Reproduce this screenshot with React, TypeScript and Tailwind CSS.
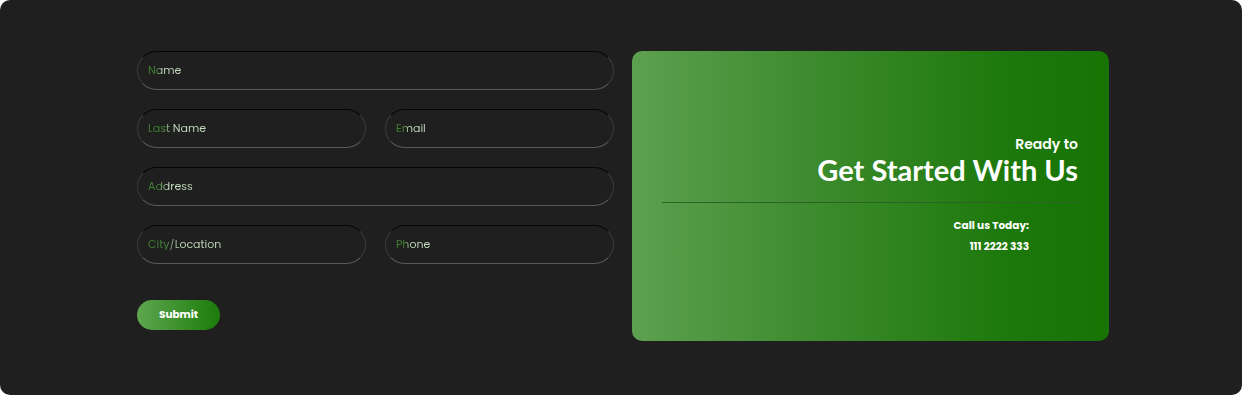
const Field = ({ label }: { label: string }) => {
  return (
    <div className="h-[39px] w-full rounded-full border border-t-[#060606] border-x-[#3a3a3a] border-b-[#5a5a5a] flex items-center px-[10px]">
      <span className="inline-block bg-[linear-gradient(90deg,#3f8030_24%,#c6dcc1_44%)] bg-clip-text text-transparent text-[11px] leading-none">
        {label}
      </span>
    </div>
  );
};

const App = () => {
  return (
    <div className="w-full h-[395px] bg-white font-['Poppins','Open_Sans',sans-serif]">
      <div className="w-full h-full rounded-[10px] bg-[#1f1f1f] flex gap-[18px] pl-[137px] pt-[51px]">
        <div className="w-[477px] flex flex-col gap-[19px]">
          <Field label="Name" />
          <div className="grid grid-cols-2 gap-[19px]">
            <Field label="Last Name" />
            <Field label="Email" />
          </div>
          <Field label="Address" />
          <div className="grid grid-cols-2 gap-[19px]">
            <Field label="City/Location" />
            <Field label="Phone" />
          </div>
          <button className="mt-[17px] w-[83px] h-[30px] rounded-full bg-[linear-gradient(90deg,#5ea64f,#1b7c0a)] text-white text-[10.5px] font-bold">
            Submit
          </button>
        </div>
        <div className="w-[477px] h-[290px] rounded-[10px] bg-[linear-gradient(90deg,#5da04f_0%,#3b8a2c_40%,#1c780a_80%,#187305_100%)] flex flex-col items-end pt-[84px] pl-[30px] pr-[31px]">
          <p className="text-white text-[14px] font-semibold leading-[18px]">Ready to</p>
          <h2 className="text-white text-[29px] font-bold leading-[34px] font-['Lato',sans-serif]">Get Started With Us</h2>
          <div className="w-full h-px bg-[#2c6324] mt-[15px]" />
          <div className="flex flex-col items-end pr-[49px] mt-[16px] gap-[7px] text-white text-[10.5px] font-bold leading-[14px]">
            <p>Call us Today:</p>
            <p>111 2222 333</p>
          </div>
        </div>
      </div>
    </div>
  );
};

export default App;
